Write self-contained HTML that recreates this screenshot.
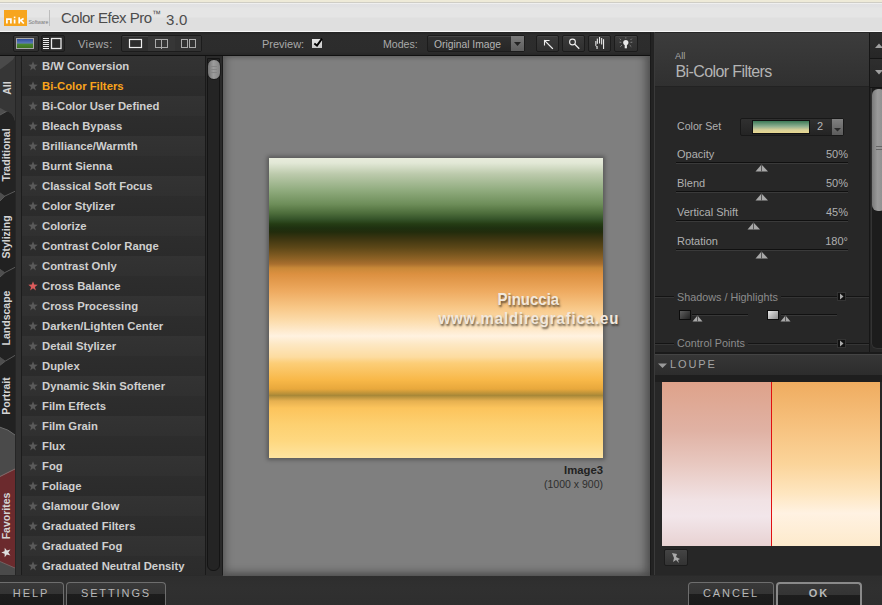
<!DOCTYPE html>
<html><head><meta charset="utf-8">
<style>
*{margin:0;padding:0;box-sizing:border-box}
html,body{width:882px;height:605px;overflow:hidden;background:#2a2a2a;font-family:"Liberation Sans",sans-serif}
.a{position:absolute}
#title{left:0;top:0;width:882px;height:32px;background:linear-gradient(#eeead8 0,#eeead8 2px,#cfcdc5 2px,#cfcdc5 3px,#efefef 3px,#efefef 4px,#e1e1e3 4px,#e2e2e3 7px,#e5e5e5 8px,#e5e5e5 17px,#dfdfdf 18px,#dfdfdf 31px,#f6f6f6 31px)}
#tb{left:0;top:32px;width:882px;height:24px;background:linear-gradient(#232323,#2d2d2d 3px,#2c2c2c 20px,#262626);border-bottom:1px solid #111}
.btn{position:absolute;background:linear-gradient(#3a3a3a,#2f2f2f);border:1px solid #1c1c1c;border-radius:2px;box-shadow:inset 0 1px 0 #444}
.lbl{position:absolute;font-size:11px;color:#a9a9a9;line-height:13px;white-space:nowrap}
/* list */
#tabs{left:0;top:56px;width:22px;height:519px;background:#2e2e2e}
#list{left:22px;top:56px;width:183px;height:519px;background:#2d2d2d;overflow:hidden}
.row{position:absolute;left:0;width:183px;height:20px;background:linear-gradient(#2d2d2d,#2b2b2b)}
.row.e{background:linear-gradient(#333,#303030)}
.row span{position:absolute;left:20px;top:4px;font-weight:bold;font-size:11.3px;color:#cfcfcf;line-height:13px;white-space:nowrap}
.row svg{position:absolute;left:5.8px;top:4.6px}
#lsb{left:205px;top:56px;width:18px;height:519px;background:#2a2a2a;border-left:1px solid #1a1a1a;border-right:1px solid #1a1a1a}
#prev{left:223px;top:56px;width:427px;height:520px;background:#7f7f7f;box-shadow:inset 8px 0 8px -6px #555, inset 0 5px 5px -4px #5a5a5a, inset 0 -9px 9px -6px #4a4a4a, inset -12px 0 10px -8px #4e4e4e}
#rp{left:652px;top:32px;width:230px;height:543px;background:#272727}
#bot{left:0;top:576px;width:882px;height:29px;background:linear-gradient(#2e2e2e,#303030 12px,#2e2e2e)}
.bb{position:absolute;border:1px solid #6e6e6e;border-bottom:none;border-radius:4px 4px 0 0;background:linear-gradient(#393939,#343434 10.5px,#1d1d1d 11px,#1a1a1a);font-size:11px;color:#b8b8b8;letter-spacing:1.9px;text-align:center;line-height:20.5px}
</style></head><body>
<div id="title" class="a"></div>
<div class="a" style="left:4px;top:10px;width:23px;height:16px;background:#f7a51e"></div>
<svg class="a" style="left:4px;top:10px" width="23" height="16"><g stroke="#fff" fill="none" stroke-width="1.7"><path d="M2.9 13.5 V9.2 H6.9 V13.5"/><path d="M10.6 9.5 V13.5"/><path d="M15.2 7.2 V13.5 M15.4 11 L19.6 8.5 M16.8 10.4 L19.8 13.5"/></g><rect x="9.8" y="6.6" width="1.6" height="1.6" fill="#fff"/></svg>
<div class="a" style="left:28.5px;top:18.5px;font-size:5.2px;color:#7a7a7a;line-height:6px;letter-spacing:-0.1px">Software</div>
<div class="a" style="left:49px;top:10px;width:1px;height:16px;background:#bdbdbd"></div>
<div class="a" style="left:61px;top:8.5px;font-size:15px;letter-spacing:-0.5px;color:#4c4c4c;line-height:18px;white-space:nowrap">Color Efex Pro</div><div class="a" style="left:152px;top:10px;font-size:9px;color:#4c4c4c;line-height:9px">™</div><div class="a" style="left:166px;top:10.5px;font-size:15px;letter-spacing:0.3px;color:#4c4c4c;line-height:18px">3.0</div>

<div id="tb" class="a"></div>
<div class="btn" style="left:13px;top:35px;width:26px;height:17px"></div>
<div class="a" style="left:16px;top:38px;width:18px;height:11px;border:1px solid #a8a8a8;background:linear-gradient(#2e4c9c,#5a78b8 45%,#4a8a30 58%,#3c7020)"></div>
<div class="btn" style="left:41px;top:35px;width:24px;height:17px;background:#2a2a2a;box-shadow:none"></div>
<svg class="a" style="left:42px;top:37px" width="22" height="14"><g fill="#eaeaea"><rect x="1" y="1" width="6" height="1"/><rect x="1" y="3" width="6" height="1"/><rect x="1" y="5" width="6" height="1"/><rect x="1" y="7" width="6" height="1"/><rect x="1" y="9" width="6" height="1"/><rect x="1" y="11" width="6" height="1"/></g><rect x="9.5" y="1.5" width="9.5" height="10" fill="none" stroke="#eaeaea" stroke-width="1.3"/></svg>
<div class="lbl" style="left:78px;top:38px;letter-spacing:0.4px">Views:</div>
<div class="btn" style="left:121px;top:35px;width:81px;height:17px;background:#2e2e2e"></div>
<svg class="a" style="left:121px;top:35px" width="81" height="17"><rect x="27" y="1" width="27" height="15" fill="#363636"/><rect x="54" y="1" width="26" height="15" fill="#323232"/><rect x="8.5" y="4.5" width="12" height="8" fill="none" stroke="#eee" stroke-width="1.2"/><rect x="34.5" y="4.5" width="12" height="8" fill="none" stroke="#aaa" stroke-width="1"/><line x1="40.5" y1="4" x2="40.5" y2="14" stroke="#aaa"/><rect x="60.5" y="4.5" width="6" height="8" fill="none" stroke="#aaa"/><rect x="68.5" y="4.5" width="6" height="8" fill="none" stroke="#aaa"/></svg>
<div class="lbl" style="left:262px;top:38px">Preview:</div>
<div class="a" style="left:312px;top:39px;width:9.5px;height:9.3px;background:linear-gradient(#e4e4e4,#c8c8c8)"></div>
<svg class="a" style="left:311px;top:35px" width="14" height="14"><path d="M3.3 8.4 L6 10.6 L11 3.6" fill="none" stroke="#000" stroke-width="1.9"/></svg>
<div class="lbl" style="left:383px;top:38px;font-size:10.6px">Modes:</div>
<div class="btn" style="left:427px;top:35px;width:98px;height:17px;background:linear-gradient(#303030,#262626)"></div>
<div class="lbl" style="left:434px;top:38px;font-size:10.3px;color:#b4b4b4">Original Image</div>
<div class="a" style="left:511px;top:36px;width:13px;height:15px;background:linear-gradient(#7a7a7a,#5e5e5e)"></div>
<svg class="a" style="left:511px;top:36px" width="13" height="15"><path d="M3 6 L10 6 L6.5 10 Z" fill="#222"/></svg>
<div class="btn" style="left:536px;top:35px;width:23px;height:17px"></div>
<div class="btn" style="left:562px;top:35px;width:23px;height:17px"></div>
<div class="btn" style="left:588px;top:35px;width:23px;height:17px"></div>
<div class="btn" style="left:614px;top:35px;width:24px;height:17px"></div>
<svg class="a" style="left:536px;top:35px" width="102" height="17"><g stroke="#ececec" fill="none" stroke-width="1.1" stroke-linecap="square"><path d="M8.5 5.5 L16.5 13.5 M8.5 5.5 L13 5.5 M8.5 5.5 L8.5 10"/><circle cx="36.5" cy="7" r="2.9"/><path d="M38.8 9.3 L42.8 13.3" stroke-width="1.3"/></g>
<g fill="#e8e8e8"><rect x="60.8" y="3.6" width="1.1" height="5.2"/><rect x="63" y="2" width="1.1" height="6.5"/><rect x="65.1" y="3" width="1.1" height="6.5"/><rect x="67" y="4.2" width="1.1" height="9.8"/><rect x="59.3" y="6" width="1.1" height="4.8"/><rect x="60.5" y="11" width="1.1" height="3"/><path d="M59.5 10.5 L61 11.5 L61 12 L59.5 11 Z"/></g>
<g fill="#e8e8e8"><circle cx="89.8" cy="7.6" r="2.6"/><rect x="88.7" y="8.5" width="2.2" height="4.8"/></g><g stroke="#8a8a8a" stroke-width="0.9"><path d="M83.7 3.7 L85 5 M95.8 3.7 L94.5 5 M83.5 7.2 L85.3 7.4 M94.5 7.4 L96.3 7.2 M84.3 11.7 L86 10 M95.3 11.7 L93.6 10 M89.8 2.3 L89.8 3.5"/></g></svg>

<div id="tabs" class="a"></div>
<svg class="a" style="left:0;top:0" width="22" height="575">
<rect x="0" y="56" width="22" height="519" fill="#4a4a4a"/>
<rect x="15" y="56" width="1" height="519" fill="#262626"/>
<rect x="16" y="56" width="5" height="519" fill="#313131"/>
<rect x="21" y="56" width="1" height="519" fill="#1c1c1c"/>
<path d="M0 69.5 Q8 64 13 59.5 L15 56 L15 108 L0 108 Z" fill="#363636"/>
<path d="M0 107.7 L6.5 111.4 L0 115 Z" fill="#4e4e4e"/>
<path d="M0 115 L6.5 111.4 Q13 112 15 121 L15 191.3 L5 196 L0 192.6 Z" fill="#232323"/>
<path d="M0 108 L15 108 L15 121 Q13 112 6.5 111.4 L0 107.7 Z" fill="#363636"/>
<path d="M0 115 L6.5 111.4" fill="none" stroke="#626262" stroke-width="0.9"/>
<path d="M0 192.6 L5 196 L0 201 Z" fill="#4e4e4e"/>
<path d="M0 201 L5 196 L15 191.3 L15 267.3 L5 272.5 L0 269 Z" fill="#212121"/>
<path d="M0 201 L5 196 L15 191.3" fill="none" stroke="#5e5e5e" stroke-width="0.9"/>
<path d="M0 269 L5 272.5 L0 277 Z" fill="#4e4e4e"/>
<path d="M0 277 L5 272.5 L15 267.3 L15 355.4 L5.5 361 L0 357 Z" fill="#222"/>
<path d="M0 277 L5 272.5 L15 267.3" fill="none" stroke="#5e5e5e" stroke-width="0.9"/>
<path d="M0 357 L5.5 361 L0 365.3 Z" fill="#4e4e4e"/>
<path d="M0 365.3 L5.5 361 L15 355.4 L15 435 Q8 429 0 427.2 Z" fill="#212121"/>
<path d="M0 365.3 L5.5 361 L15 355.4" fill="none" stroke="#5e5e5e" stroke-width="0.9"/>
<path d="M0 427.2 Q8 429 15 435" fill="none" stroke="#707070" stroke-width="0.9"/>
<path d="M0 476.5 L15 469 L15 568 L0 561.5 Z" fill="#6b2a2d"/>
<path d="M0 476.5 L15 469" fill="none" stroke="#8a7070" stroke-width="0.9"/>
<path d="M0 561.5 L15 568" fill="none" stroke="#7a6a6a" stroke-width="0.8"/>
</svg>
<div class="a" style="left:1px;top:89px;width:14px;height:0;overflow:visible">
</div>
<div class="a" style="left:-33px;top:81px;width:80px;height:14px;line-height:14px;text-align:center;font-weight:bold;font-size:10.5px;color:#d4d4d4;transform:rotate(-90deg);white-space:nowrap">All</div>
<div class="a" style="left:-34px;top:147.5px;width:80px;height:14px;line-height:14px;text-align:center;font-weight:bold;font-size:10.5px;color:#d4d4d4;transform:rotate(-90deg);white-space:nowrap">Traditional</div>
<div class="a" style="left:-34px;top:230px;width:80px;height:14px;line-height:14px;text-align:center;font-weight:bold;font-size:10.5px;color:#d4d4d4;transform:rotate(-90deg);white-space:nowrap">Stylizing</div>
<div class="a" style="left:-34px;top:310.5px;width:80px;height:14px;line-height:14px;text-align:center;font-weight:bold;font-size:10.5px;color:#d4d4d4;transform:rotate(-90deg);white-space:nowrap">Landscape</div>
<div class="a" style="left:-34px;top:389px;width:80px;height:14px;line-height:14px;text-align:center;font-weight:bold;font-size:10.5px;color:#d4d4d4;transform:rotate(-90deg);white-space:nowrap">Portrait</div>
<div class="a" style="left:-34px;top:509px;width:80px;height:14px;line-height:14px;text-align:center;font-weight:bold;font-size:10.5px;color:#d4d4d4;transform:rotate(-90deg);white-space:nowrap">Favorites</div>
<svg class="a" style="left:1px;top:547px" width="10" height="11" viewBox="0 0 10 10"><path d="M5 0.3 L6.2 3.6 L9.7 3.7 L6.9 5.9 L7.9 9.4 L5 7.3 L2.1 9.4 L3.1 5.9 L0.3 3.7 L3.8 3.6 Z" fill="#e0e0e0" transform="rotate(-90 5 5)"/></svg>

<div id="list" class="a">
<div class="row e" style="top:0px"><svg width="10" height="10" viewBox="0 0 10 10"><path d="M5 0.3 L6.2 3.6 L9.7 3.7 L6.9 5.9 L7.9 9.4 L5 7.3 L2.1 9.4 L3.1 5.9 L0.3 3.7 L3.8 3.6 Z" fill="#5a5a5a"/></svg><span>B/W Conversion</span></div>
<div class="row" style="top:20px"><svg width="10" height="10" viewBox="0 0 10 10"><path d="M5 0.3 L6.2 3.6 L9.7 3.7 L6.9 5.9 L7.9 9.4 L5 7.3 L2.1 9.4 L3.1 5.9 L0.3 3.7 L3.8 3.6 Z" fill="#5a5a5a"/></svg><span style="color:#f9a41c">Bi-Color Filters</span></div>
<div class="row e" style="top:40px"><svg width="10" height="10" viewBox="0 0 10 10"><path d="M5 0.3 L6.2 3.6 L9.7 3.7 L6.9 5.9 L7.9 9.4 L5 7.3 L2.1 9.4 L3.1 5.9 L0.3 3.7 L3.8 3.6 Z" fill="#5a5a5a"/></svg><span>Bi-Color User Defined</span></div>
<div class="row" style="top:60px"><svg width="10" height="10" viewBox="0 0 10 10"><path d="M5 0.3 L6.2 3.6 L9.7 3.7 L6.9 5.9 L7.9 9.4 L5 7.3 L2.1 9.4 L3.1 5.9 L0.3 3.7 L3.8 3.6 Z" fill="#5a5a5a"/></svg><span>Bleach Bypass</span></div>
<div class="row e" style="top:80px"><svg width="10" height="10" viewBox="0 0 10 10"><path d="M5 0.3 L6.2 3.6 L9.7 3.7 L6.9 5.9 L7.9 9.4 L5 7.3 L2.1 9.4 L3.1 5.9 L0.3 3.7 L3.8 3.6 Z" fill="#5a5a5a"/></svg><span>Brilliance/Warmth</span></div>
<div class="row" style="top:100px"><svg width="10" height="10" viewBox="0 0 10 10"><path d="M5 0.3 L6.2 3.6 L9.7 3.7 L6.9 5.9 L7.9 9.4 L5 7.3 L2.1 9.4 L3.1 5.9 L0.3 3.7 L3.8 3.6 Z" fill="#5a5a5a"/></svg><span>Burnt Sienna</span></div>
<div class="row e" style="top:120px"><svg width="10" height="10" viewBox="0 0 10 10"><path d="M5 0.3 L6.2 3.6 L9.7 3.7 L6.9 5.9 L7.9 9.4 L5 7.3 L2.1 9.4 L3.1 5.9 L0.3 3.7 L3.8 3.6 Z" fill="#5a5a5a"/></svg><span>Classical Soft Focus</span></div>
<div class="row" style="top:140px"><svg width="10" height="10" viewBox="0 0 10 10"><path d="M5 0.3 L6.2 3.6 L9.7 3.7 L6.9 5.9 L7.9 9.4 L5 7.3 L2.1 9.4 L3.1 5.9 L0.3 3.7 L3.8 3.6 Z" fill="#5a5a5a"/></svg><span>Color Stylizer</span></div>
<div class="row e" style="top:160px"><svg width="10" height="10" viewBox="0 0 10 10"><path d="M5 0.3 L6.2 3.6 L9.7 3.7 L6.9 5.9 L7.9 9.4 L5 7.3 L2.1 9.4 L3.1 5.9 L0.3 3.7 L3.8 3.6 Z" fill="#5a5a5a"/></svg><span>Colorize</span></div>
<div class="row" style="top:180px"><svg width="10" height="10" viewBox="0 0 10 10"><path d="M5 0.3 L6.2 3.6 L9.7 3.7 L6.9 5.9 L7.9 9.4 L5 7.3 L2.1 9.4 L3.1 5.9 L0.3 3.7 L3.8 3.6 Z" fill="#5a5a5a"/></svg><span>Contrast Color Range</span></div>
<div class="row e" style="top:200px"><svg width="10" height="10" viewBox="0 0 10 10"><path d="M5 0.3 L6.2 3.6 L9.7 3.7 L6.9 5.9 L7.9 9.4 L5 7.3 L2.1 9.4 L3.1 5.9 L0.3 3.7 L3.8 3.6 Z" fill="#5a5a5a"/></svg><span>Contrast Only</span></div>
<div class="row" style="top:220px"><svg width="10" height="10" viewBox="0 0 10 10"><path d="M5 0.3 L6.2 3.6 L9.7 3.7 L6.9 5.9 L7.9 9.4 L5 7.3 L2.1 9.4 L3.1 5.9 L0.3 3.7 L3.8 3.6 Z" fill="#dc5c5c"/></svg><span>Cross Balance</span></div>
<div class="row e" style="top:240px"><svg width="10" height="10" viewBox="0 0 10 10"><path d="M5 0.3 L6.2 3.6 L9.7 3.7 L6.9 5.9 L7.9 9.4 L5 7.3 L2.1 9.4 L3.1 5.9 L0.3 3.7 L3.8 3.6 Z" fill="#5a5a5a"/></svg><span>Cross Processing</span></div>
<div class="row" style="top:260px"><svg width="10" height="10" viewBox="0 0 10 10"><path d="M5 0.3 L6.2 3.6 L9.7 3.7 L6.9 5.9 L7.9 9.4 L5 7.3 L2.1 9.4 L3.1 5.9 L0.3 3.7 L3.8 3.6 Z" fill="#5a5a5a"/></svg><span>Darken/Lighten Center</span></div>
<div class="row e" style="top:280px"><svg width="10" height="10" viewBox="0 0 10 10"><path d="M5 0.3 L6.2 3.6 L9.7 3.7 L6.9 5.9 L7.9 9.4 L5 7.3 L2.1 9.4 L3.1 5.9 L0.3 3.7 L3.8 3.6 Z" fill="#5a5a5a"/></svg><span>Detail Stylizer</span></div>
<div class="row" style="top:300px"><svg width="10" height="10" viewBox="0 0 10 10"><path d="M5 0.3 L6.2 3.6 L9.7 3.7 L6.9 5.9 L7.9 9.4 L5 7.3 L2.1 9.4 L3.1 5.9 L0.3 3.7 L3.8 3.6 Z" fill="#5a5a5a"/></svg><span>Duplex</span></div>
<div class="row e" style="top:320px"><svg width="10" height="10" viewBox="0 0 10 10"><path d="M5 0.3 L6.2 3.6 L9.7 3.7 L6.9 5.9 L7.9 9.4 L5 7.3 L2.1 9.4 L3.1 5.9 L0.3 3.7 L3.8 3.6 Z" fill="#5a5a5a"/></svg><span>Dynamic Skin Softener</span></div>
<div class="row" style="top:340px"><svg width="10" height="10" viewBox="0 0 10 10"><path d="M5 0.3 L6.2 3.6 L9.7 3.7 L6.9 5.9 L7.9 9.4 L5 7.3 L2.1 9.4 L3.1 5.9 L0.3 3.7 L3.8 3.6 Z" fill="#5a5a5a"/></svg><span>Film Effects</span></div>
<div class="row e" style="top:360px"><svg width="10" height="10" viewBox="0 0 10 10"><path d="M5 0.3 L6.2 3.6 L9.7 3.7 L6.9 5.9 L7.9 9.4 L5 7.3 L2.1 9.4 L3.1 5.9 L0.3 3.7 L3.8 3.6 Z" fill="#5a5a5a"/></svg><span>Film Grain</span></div>
<div class="row" style="top:380px"><svg width="10" height="10" viewBox="0 0 10 10"><path d="M5 0.3 L6.2 3.6 L9.7 3.7 L6.9 5.9 L7.9 9.4 L5 7.3 L2.1 9.4 L3.1 5.9 L0.3 3.7 L3.8 3.6 Z" fill="#5a5a5a"/></svg><span>Flux</span></div>
<div class="row e" style="top:400px"><svg width="10" height="10" viewBox="0 0 10 10"><path d="M5 0.3 L6.2 3.6 L9.7 3.7 L6.9 5.9 L7.9 9.4 L5 7.3 L2.1 9.4 L3.1 5.9 L0.3 3.7 L3.8 3.6 Z" fill="#5a5a5a"/></svg><span>Fog</span></div>
<div class="row" style="top:420px"><svg width="10" height="10" viewBox="0 0 10 10"><path d="M5 0.3 L6.2 3.6 L9.7 3.7 L6.9 5.9 L7.9 9.4 L5 7.3 L2.1 9.4 L3.1 5.9 L0.3 3.7 L3.8 3.6 Z" fill="#5a5a5a"/></svg><span>Foliage</span></div>
<div class="row e" style="top:440px"><svg width="10" height="10" viewBox="0 0 10 10"><path d="M5 0.3 L6.2 3.6 L9.7 3.7 L6.9 5.9 L7.9 9.4 L5 7.3 L2.1 9.4 L3.1 5.9 L0.3 3.7 L3.8 3.6 Z" fill="#5a5a5a"/></svg><span>Glamour Glow</span></div>
<div class="row" style="top:460px"><svg width="10" height="10" viewBox="0 0 10 10"><path d="M5 0.3 L6.2 3.6 L9.7 3.7 L6.9 5.9 L7.9 9.4 L5 7.3 L2.1 9.4 L3.1 5.9 L0.3 3.7 L3.8 3.6 Z" fill="#5a5a5a"/></svg><span>Graduated Filters</span></div>
<div class="row e" style="top:480px"><svg width="10" height="10" viewBox="0 0 10 10"><path d="M5 0.3 L6.2 3.6 L9.7 3.7 L6.9 5.9 L7.9 9.4 L5 7.3 L2.1 9.4 L3.1 5.9 L0.3 3.7 L3.8 3.6 Z" fill="#5a5a5a"/></svg><span>Graduated Fog</span></div>
<div class="row" style="top:500px"><svg width="10" height="10" viewBox="0 0 10 10"><path d="M5 0.3 L6.2 3.6 L9.7 3.7 L6.9 5.9 L7.9 9.4 L5 7.3 L2.1 9.4 L3.1 5.9 L0.3 3.7 L3.8 3.6 Z" fill="#5a5a5a"/></svg><span>Graduated Neutral Density</span></div>
</div>
<div id="lsb" class="a"></div>
<div class="a" style="left:207px;top:58px;width:13px;height:513px;background:#242424;border:1px solid #141414;border-radius:0 0 6px 6px"></div>
<div class="a" style="left:207px;top:59px;width:14px;height:21px;border-radius:7px;background:linear-gradient(90deg,#727272,#9c9c9c 45%,#848484);border:1px solid #1a1a1a"></div>
<div class="a" style="left:211px;top:66px;width:6px;height:1px;background:#858585"></div>
<div class="a" style="left:211px;top:69px;width:6px;height:1px;background:#858585"></div>
<div class="a" style="left:211px;top:72px;width:6px;height:1px;background:#858585"></div>
<div id="prev" class="a"></div>

<div class="a" style="left:269px;top:158px;width:334px;height:300px;box-shadow:0 0 4px 2px rgba(0,0,0,0.3);background:linear-gradient(#e8ecdc 0px,#e2e8d6 5px,#bccaac 16px,#8eaa7c 33px,#6e8e5a 46px,#4e6e3c 55px,#36542a 61px,#243c14 66px,#1e3010 70px,#222c0c 74px,#3a3410 80px,#5e4818 90px,#8a6024 100px,#a86e2e 106px,#c88838 110px,#dc9040 116px,#eeaa60 133px,#f8c888 150px,#fcdcac 163px,#fff2e0 178px,#fde8c4 186px,#fddca0 199px,#fcce78 205px,#f8b848 222px,#e8a83c 231px,#a88838 237.5px,#e6b050 243px,#fcc45c 250px,#fdd070 266px,#fed880 283px,#fee4a0 300px)"></div>
<div class="a" style="left:497.5px;top:291px;font-size:15px;font-weight:bold;color:#f2e8dc;text-shadow:1px 1.5px 2px rgba(50,40,30,0.75);line-height:17px;transform:scaleY(1.12);transform-origin:0 13.7px">Pinuccia</div>
<div class="a" style="left:438.5px;top:310px;font-size:15px;font-weight:bold;color:#f2e8dc;text-shadow:1px 1.5px 2px rgba(50,40,30,0.75);line-height:17px;letter-spacing:0.85px;transform:scaleY(1.12);transform-origin:0 13.7px;white-space:nowrap">www.maldiregrafica.eu</div>
<div class="a" style="left:503px;top:464px;width:100px;text-align:right;font-size:11.3px;font-weight:bold;color:#222;line-height:13px">Image3</div>
<div class="a" style="left:483px;top:478px;width:120px;text-align:right;font-size:10.5px;color:#2e2e2e;line-height:13px">(1000 x 900)</div>
<div id="rp" class="a"></div>
<div class="a" style="left:650px;top:32px;width:5px;height:543px;background:#232323;border-left:1px solid #1a1a1a;border-right:1px solid #3a3a3a"></div>
<div class="a" style="left:655px;top:33px;width:214px;height:54px;background:linear-gradient(#3c3c3c,#303030);border-bottom:1px solid #222"></div>
<div class="lbl" style="left:675px;top:50.7px;font-size:9.2px;color:#a8a8a8;line-height:10px">All</div>
<div class="lbl" style="left:675.5px;top:62.5px;font-size:16px;letter-spacing:-0.6px;color:#b4b4b4;line-height:18px">Bi-Color Filters</div>
<div class="a" style="left:869px;top:33px;width:13px;height:319px;background:#262626;border-left:1px solid #161616"></div><div class="a" style="left:871px;top:88px;width:14px;height:261px;background:#1c1c1c;border-radius:0 0 0 6px;border:1px solid #333;border-top:none"></div>
<div class="a" style="left:870px;top:33px;width:12px;height:26px;background:linear-gradient(#2e2e2e,#262626);border-bottom:1px solid #141414"></div>
<div class="a" style="left:870px;top:59px;width:12px;height:29px;background:linear-gradient(#2e2e2e,#262626);border-bottom:1px solid #141414"></div>
<svg class="a" style="left:874px;top:42px" width="10" height="8"><path d="M1 6 L5 1.5 L9 6 Z" fill="#a0a0a0"/></svg>
<svg class="a" style="left:874px;top:68px" width="10" height="8"><path d="M1 2 L5 6.5 L9 2 Z" fill="#a0a0a0"/></svg>
<div class="a" style="left:872px;top:89px;width:14px;height:122px;border-radius:6px;background:linear-gradient(90deg,#7a7a7a,#9a9a9a 40%,#8a8a8a)"></div>
<div class="a" style="left:876px;top:146px;width:6px;height:1px;background:#666"></div>
<div class="a" style="left:876px;top:149px;width:6px;height:1px;background:#666"></div>
<div class="lbl" style="left:677px;top:120px;font-size:10.6px;color:#b0b0b0">Color Set</div>
<div class="a" style="left:740px;top:118px;width:104px;height:18px;background:linear-gradient(#303030,#242424);border:1px solid #181818;border-radius:2px"></div>
<div class="a" style="left:752px;top:120px;width:58px;height:14px;border:1px solid #111;background:linear-gradient(#3c7a58,#8fb090 45%,#d8d098 75%,#e8d890)"></div>
<div class="lbl" style="left:817px;top:120px;font-size:11px;color:#b8b8b8">2</div>
<div class="a" style="left:832px;top:119px;width:11px;height:16px;background:linear-gradient(#808080,#5c5c5c)"></div>
<svg class="a" style="left:832px;top:119px" width="11" height="16"><path d="M2 9 L9 9 L5.5 12.5 Z" fill="#2a2a2a"/></svg>
<div class="lbl" style="left:677px;top:148px;font-size:11px;color:#b0b0b0">Opacity</div>
<div class="lbl" style="left:798px;top:148px;width:50px;text-align:right;font-size:11px;color:#b0b0b0">50%</div>
<div class="a" style="left:676px;top:162px;width:172px;height:1px;background:#101010"></div>
<div class="a" style="left:676px;top:163px;width:172px;height:1px;background:#3a3a3a"></div>
<svg class="a" style="left:755px;top:164px" width="14" height="8"><path d="M0.5 7.5 L6.5 0.5 L13 7.5 Z" fill="#a8a8a8"/><path d="M6.5 1 L6.5 7.5" stroke="#555" stroke-width="1"/></svg><div class="lbl" style="left:677px;top:177px;font-size:11px;color:#b0b0b0">Blend</div>
<div class="lbl" style="left:798px;top:177px;width:50px;text-align:right;font-size:11px;color:#b0b0b0">50%</div>
<div class="a" style="left:676px;top:191px;width:172px;height:1px;background:#101010"></div>
<div class="a" style="left:676px;top:192px;width:172px;height:1px;background:#3a3a3a"></div>
<svg class="a" style="left:755px;top:193px" width="14" height="8"><path d="M0.5 7.5 L6.5 0.5 L13 7.5 Z" fill="#a8a8a8"/><path d="M6.5 1 L6.5 7.5" stroke="#555" stroke-width="1"/></svg><div class="lbl" style="left:677px;top:206px;font-size:11px;color:#b0b0b0">Vertical Shift</div>
<div class="lbl" style="left:798px;top:206px;width:50px;text-align:right;font-size:11px;color:#b0b0b0">45%</div>
<div class="a" style="left:676px;top:220px;width:172px;height:1px;background:#101010"></div>
<div class="a" style="left:676px;top:221px;width:172px;height:1px;background:#3a3a3a"></div>
<svg class="a" style="left:747px;top:222px" width="14" height="8"><path d="M0.5 7.5 L6.5 0.5 L13 7.5 Z" fill="#a8a8a8"/><path d="M6.5 1 L6.5 7.5" stroke="#555" stroke-width="1"/></svg><div class="lbl" style="left:677px;top:235px;font-size:11px;color:#b0b0b0">Rotation</div>
<div class="lbl" style="left:798px;top:235px;width:50px;text-align:right;font-size:11px;color:#b0b0b0">180°</div>
<div class="a" style="left:676px;top:249px;width:172px;height:1px;background:#101010"></div>
<div class="a" style="left:676px;top:250px;width:172px;height:1px;background:#3a3a3a"></div>
<svg class="a" style="left:755px;top:251px" width="14" height="8"><path d="M0.5 7.5 L6.5 0.5 L13 7.5 Z" fill="#a8a8a8"/><path d="M6.5 1 L6.5 7.5" stroke="#555" stroke-width="1"/></svg>
<div class="a" style="left:655px;top:296px;width:214px;height:1px;background:#141414"></div>
<div class="a" style="left:655px;top:297px;width:214px;height:1px;background:#353535"></div>
<div class="lbl" style="left:674px;top:291px;padding:0 3px;background:#272727;font-size:10.8px;color:#8c8c8c">Shadows / Highlights</div>
<div class="a" style="left:837px;top:292px;width:9px;height:9px;background:#111;border:1px solid #333"></div>
<svg class="a" style="left:837px;top:292px" width="9" height="9"><path d="M3 1.5 L6.5 4.5 L3 7.5 Z" fill="#aaa"/></svg>
<div class="a" style="left:679px;top:310px;width:12px;height:10px;border:1px solid #0c0c0c;background:linear-gradient(135deg,#606060,#202020)"></div>
<div class="a" style="left:692px;top:314px;width:56px;height:1px;background:#111"></div>
<div class="a" style="left:692px;top:315px;width:56px;height:1px;background:#383838"></div>
<svg class="a" style="left:692px;top:315px" width="11" height="7"><path d="M0.5 6.5 L5.5 0.5 L10.5 6.5 Z" fill="#a8a8a8"/><path d="M5.5 1 L5.5 6.5" stroke="#555"/></svg>
<div class="a" style="left:767px;top:310px;width:12px;height:10px;border:1px solid #0c0c0c;background:linear-gradient(135deg,#e8e8e8,#8a8a8a)"></div>
<div class="a" style="left:781px;top:314px;width:56px;height:1px;background:#111"></div>
<div class="a" style="left:781px;top:315px;width:56px;height:1px;background:#383838"></div>
<svg class="a" style="left:780px;top:315px" width="11" height="7"><path d="M0.5 6.5 L5.5 0.5 L10.5 6.5 Z" fill="#a8a8a8"/><path d="M5.5 1 L5.5 6.5" stroke="#555"/></svg>
<div class="a" style="left:655px;top:343px;width:214px;height:1px;background:#141414"></div>
<div class="a" style="left:655px;top:344px;width:214px;height:1px;background:#353535"></div>
<div class="lbl" style="left:674px;top:337px;padding:0 3px;background:#272727;font-size:10.8px;color:#8c8c8c">Control Points</div>
<div class="a" style="left:837px;top:339px;width:9px;height:9px;background:#111;border:1px solid #333"></div>
<svg class="a" style="left:837px;top:339px" width="9" height="9"><path d="M3 1.5 L6.5 4.5 L3 7.5 Z" fill="#aaa"/></svg>
<div class="a" style="left:655px;top:352px;width:227px;height:3px;background:#1a1a1a;border-bottom:1px solid #444"></div>
<div class="a" style="left:655px;top:355px;width:227px;height:20px;background:linear-gradient(#363636,#2c2c2c)"></div>
<svg class="a" style="left:657px;top:362px" width="12" height="8"><path d="M1 1.5 L10 1.5 L5.5 6 Z" fill="#9a9a9a"/></svg>
<div class="lbl" style="left:670px;top:358px;font-size:11px;color:#a4a4a4;letter-spacing:1.9px">LOUPE</div>
<div class="a" style="left:655px;top:375px;width:227px;height:200px;background:#272727"></div>
<div class="a" style="left:655px;top:375px;width:227px;height:7px;background:#1e1e1e"></div>
<div class="a" style="left:662px;top:382px;width:109px;height:164px;background:linear-gradient(#dea28a,#e0b2a4 30%,#e8c8c0 50%,#f1e2e4 72%,#f2e6ea 82%,#e8d2d2)"></div>
<div class="a" style="left:772px;top:382px;width:108px;height:164px;background:linear-gradient(#efac60,#f6c07c 25%,#fbd49a 50%,#fee6c0 68%,#fff2e2 80%,#fdeacc)"></div>
<div class="a" style="left:771px;top:382px;width:1px;height:164px;background:#e01010"></div>
<div class="btn" style="left:664px;top:549px;width:24px;height:17px;background:linear-gradient(#444,#333)"></div>
<svg class="a" style="left:668px;top:551px" width="16" height="14"><path d="M4 2 L9 3 L8 6 L12 8 L10 9 L11 12 L8 9 L5 11 L6 7 Z" fill="#aaa"/></svg>
<div id="bot" class="a"></div>
<div class="bb" style="left:-10px;top:581.5px;width:74px;height:24px;padding-left:8px">HELP</div>
<div class="bb" style="left:66px;top:581.5px;width:100px;height:24px">SETTINGS</div>
<div class="bb" style="left:688px;top:581.5px;width:86px;height:24px">CANCEL</div>
<div class="bb" style="left:776px;top:581.5px;width:86px;height:24px;border:2px solid #8a8a8a;border-bottom:none;font-weight:bold;line-height:18.5px">OK</div>
</body></html>
